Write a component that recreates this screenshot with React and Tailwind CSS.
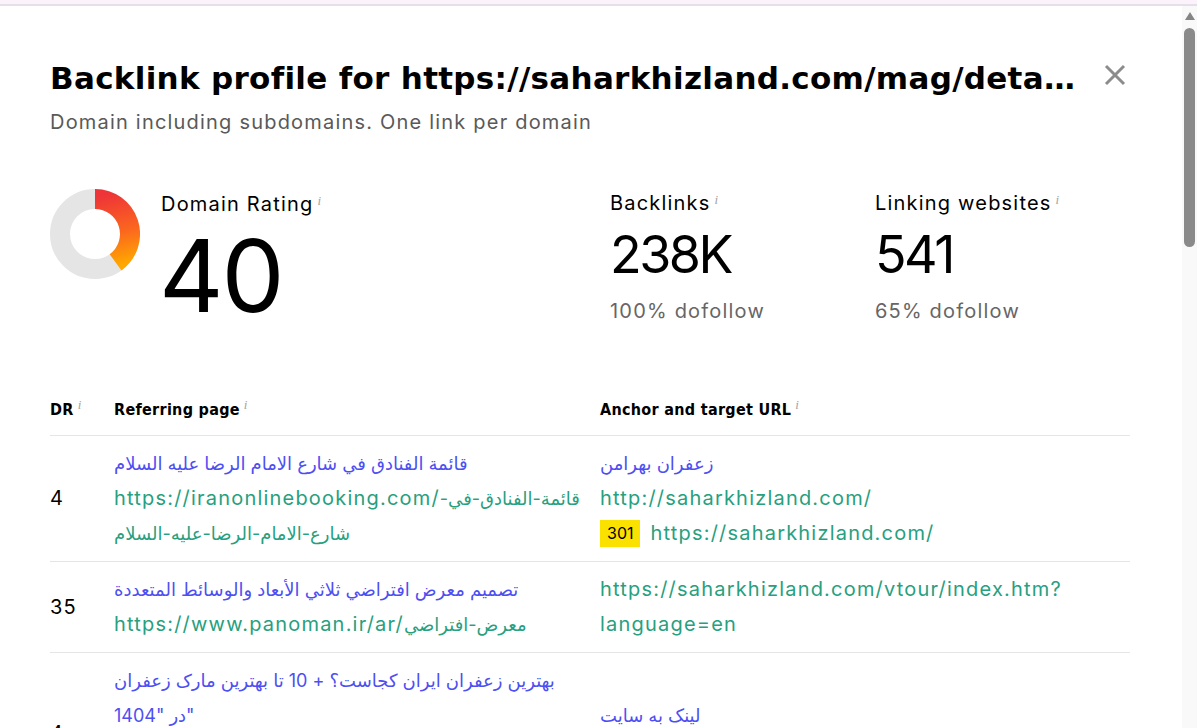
const ROWS = [
  {
    dr: "4",
    title: ["قائمة الفنادق في شارع الامام الرضا عليه السلام"],
    url: [
      ["https://iranonlinebooking.com/", "قائمة-الفنادق-في-\u200F"],
      ["", "شارع-الامام-الرضا-عليه-السلام"],
    ],
    anchor: "زعفران بهرامن",
    target: ["http://saharkhizland.com/"],
    redirect: "https://saharkhizland.com/",
  },
  {
    dr: "35",
    title: ["تصميم معرض افتراضي ثلاثي الأبعاد والوسائط المتعددة"],
    url: [["https://www.panoman.ir/ar/", "معرض-افتراضي"]],
    target: ["https://saharkhizland.com/vtour/index.htm?", "language=en"],
  },
  {
    dr: "4",
    title: ["بهترین زعفران ایران کجاست؟ + 10 تا بهترین مارک زعفران", "در \"1404\""],
    url: [["https://iranonlinebooking.com/fa/blog/", ""], ["best-saffron-brands", ""]],
    anchor: "لینک به سایت",
    target: ["https://saharkhizland.com/"],
  },
];

const sans = "font-['Inter','Noto_Sans','DejaVu_Sans',sans-serif]";
const cond = "font-['DejaVu_Sans_Condensed','DejaVu_Sans',sans-serif]";

function Info() {
  return <sup className="ml-[4px] font-['Liberation_Serif',serif] italic text-[13px] tracking-normal text-[#a3a3a3] font-normal">i</sup>;
}

function Donut() {
  // 40% arc, clockwise from 12 o'clock
  return (
    <svg width="90" height="90" viewBox="0 0 90 90" className="shrink-0">
      <defs>
        <linearGradient id="dr" gradientUnits="userSpaceOnUse" x1="45" y1="8" x2="62" y2="78">
          <stop offset="0" stopColor="#ee3438" />
          <stop offset="0.55" stopColor="#fb661e" />
          <stop offset="1" stopColor="#ffa800" />
        </linearGradient>
      </defs>
      <circle cx="45" cy="45" r="35" fill="none" stroke="#e5e5e5" strokeWidth="20" />
      <path d="M45 10 A35 35 0 0 1 65.57 73.32" fill="none" stroke="url(#dr)" strokeWidth="20" />
    </svg>
  );
}

function Stat({ label, value, sub }) {
  return (
    <div className="w-[265px] shrink-0">
      <div className="text-[20px] leading-[28px] tracking-[1.2px] text-black">
        {label}
        <Info />
      </div>
      <div className="mt-[12px] text-[52px] leading-none tracking-[-2.5px] text-black">{value}</div>
      <div className="mt-[16px] text-[20px] leading-[28px] tracking-[1.2px] text-[#666]">{sub}</div>
    </div>
  );
}

export default function App() {
  return (
    <div className={`h-[728px] w-[1197px] overflow-hidden bg-white flex flex-col ${sans}`}>
      <div className="h-[4px] bg-[#fcf2fb]" />
      <div className="h-[2px] bg-[#e4dfe8]" />
      <div className="flex flex-1 min-h-0">
        <div className="flex-1 min-w-0 pl-[50px] pr-[52px] pt-[52px]">
          <div className="flex items-center gap-[26px]">
            <h1 className="flex-1 min-w-0 truncate text-[31px] leading-[40px] tracking-[0.3px] font-bold text-black font-['DejaVu_Sans',sans-serif]">
              Backlink profile for https://saharkhizland.com/mag/detail/best-saffron-brands
            </h1>
            <button className="mr-[4px] mt-[-6px] shrink-0">
              <svg width="22" height="22" viewBox="0 0 22 22">
                <path d="M2 2L20 20M20 2L2 20" stroke="#8c8c8c" strokeWidth="3" />
              </svg>
            </button>
          </div>
          <p className="mt-[10px] text-[20px] leading-[28px] tracking-[1.2px] text-[#595959]">
            Domain including subdomains. One link per domain
          </p>

          <div className="mt-[53px] flex">
            <div className="w-[560px] shrink-0 flex gap-[21px]">
              <Donut />
              <div className="pt-[1px]">
                <div className="text-[20px] leading-[28px] tracking-[1.2px] text-black">
                  Domain Rating
                  <Info />
                </div>
                <div className="mt-[8px] ml-[-2px] text-[100px] leading-none tracking-[-2px] text-black">40</div>
              </div>
            </div>
            <Stat label="Backlinks" value="238K" sub="100% dofollow" />
            <Stat label="Linking websites" value="541" sub="65% dofollow" />
          </div>

          <table className="mt-[72px] w-full border-collapse">
            <thead>
              <tr className="border-b border-[#e5e5e5]">
                <th className={`w-[64px] pb-[13px] text-left text-[16px] leading-[24px] tracking-[0.3px] font-bold ${cond}`}>
                  DR
                  <Info />
                </th>
                <th className={`w-[486px] pb-[13px] text-left text-[16px] leading-[24px] tracking-[0.3px] font-bold ${cond}`}>
                  Referring page
                  <Info />
                </th>
                <th className={`pb-[13px] text-left text-[16px] leading-[24px] tracking-[0.3px] font-bold ${cond}`}>
                  Anchor and target URL
                  <Info />
                </th>
              </tr>
            </thead>
            <tbody>
              {ROWS.map((row, i) => (
                <tr key={i} className="border-b border-[#e5e5e5]">
                  <td className="py-[10px] align-middle text-[20px] leading-[35px] tracking-[1.2px] text-black">{row.dr}</td>
                  <td className="py-[10px] pr-[10px] align-middle">
                    {row.title.map((t, j) => (
                      <div key={j} className="whitespace-nowrap text-[18px] leading-[35px] text-[#4d4ff2]">{t}</div>
                    ))}
                    {row.url.map(([latin, arabic], j) => (
                      <div key={j} className="whitespace-nowrap text-[20px] leading-[35px] text-[#27a080]">
                        <span className="tracking-[1.2px]">{latin}</span>
                        <span className="text-[18px]">{arabic}</span>
                      </div>
                    ))}
                  </td>
                  <td className="py-[10px] align-middle">
                    {row.anchor && <div className="text-[18px] leading-[35px] text-[#4d4ff2]">{row.anchor}</div>}
                    {row.target.map((u, j) => (
                      <div key={j} className="whitespace-nowrap text-[20px] leading-[35px] tracking-[1.2px] text-[#27a080]">{u}</div>
                    ))}
                    {row.redirect && (
                      <div className="flex items-center gap-[10px] whitespace-nowrap text-[20px] leading-[35px] tracking-[1.2px] text-[#27a080]">
                        <span className="bg-[#fae100] px-[7px] text-[16px] leading-[27px] tracking-normal text-black">301</span>
                        {row.redirect}
                      </div>
                    )}
                  </td>
                </tr>
              ))}
            </tbody>
          </table>
        </div>

        <div className="w-[15px] shrink-0 bg-[#f9f9f9] flex flex-col items-center">
          <svg width="10" height="8" viewBox="0 0 10 8" className="mt-[6px]">
            <path d="M5 0L10 8H0Z" fill="#858585" />
          </svg>
          <div className="mt-[8px] h-[219px] w-[11px] rounded-full bg-[#8a8a8a]" />
        </div>
      </div>
    </div>
  );
}
